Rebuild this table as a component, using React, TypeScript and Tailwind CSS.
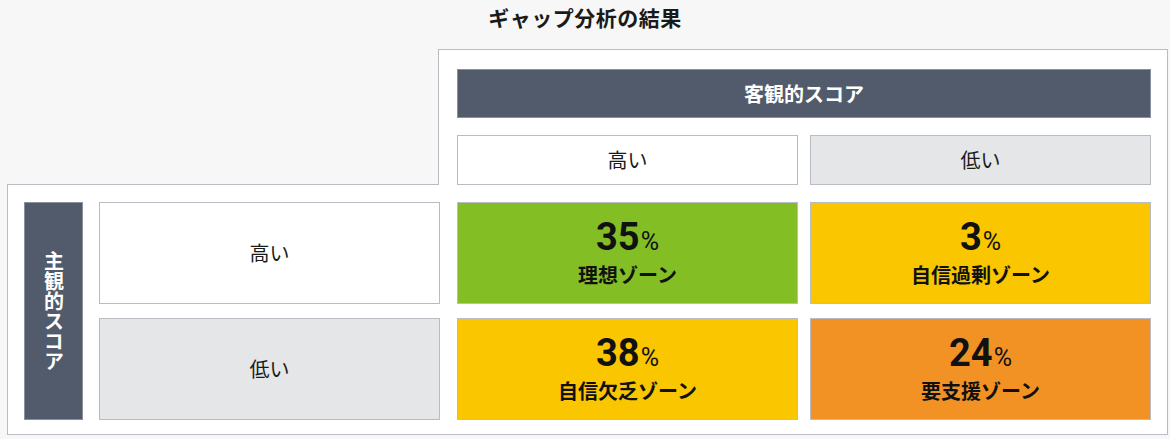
const jp = "font-['Noto_Sans_CJK_JP','Noto_Sans',sans-serif]";

const zones = [
  [
    { pct: "35", name: "理想ゾーン", bg: "bg-[#83be25]" },
    { pct: "3", name: "自信過剰ゾーン", bg: "bg-[#fac600]" },
  ],
  [
    { pct: "38", name: "自信欠乏ゾーン", bg: "bg-[#fac600]" },
    { pct: "24", name: "要支援ゾーン", bg: "bg-[#f39224]" },
  ],
];

function Zone({ pct, name, bg }: { pct: string; name: string; bg: string }) {
  return (
    <div
      className={`w-[341px] h-[102px] border border-[#b9bdc3] ${bg} flex flex-col items-center justify-center text-[#111]`}
    >
      <div className="flex items-baseline h-[30px] leading-[30px] font-['Roboto',sans-serif]">
        <span className="text-[38px] font-bold">{pct}</span>
        <span className="text-[25px] ml-[1px]">%</span>
      </div>
      <div className={`${jp} font-bold text-[20px] leading-none mt-[13px]`}>{name}</div>
    </div>
  );
}

export default function App() {
  return (
    <div className={`w-[1170px] h-[439px] bg-[#f7f7f7] ${jp} overflow-hidden`}>
      <h1 className="h-[49px] pt-[4px] text-center text-[21px] font-bold leading-[26px] tracking-[0.5px] text-[#1a1a1a]">
        ギャップ分析の結果
      </h1>

      <div className="pl-[7px] pr-[2px]">
        {/* top part: objective score header */}
        <div className="relative z-10 ml-[431px] -mb-px border border-b-0 border-[#b9bdc3] bg-white pt-[19px] pl-[18px] pr-[16px]">
          <div className="w-[694px] h-[49px] bg-[#525b6b] border border-[#8a919c] flex items-center justify-center text-white font-bold text-[20px]">
            客観的スコア
          </div>
          <div className="flex gap-[12px] mt-[17px]">
            <div className="w-[341px] h-[50px] border border-[#b9bdc3] bg-white flex items-center justify-center text-[20px] text-[#1a1a1a]">
              高い
            </div>
            <div className="w-[341px] h-[50px] border border-[#b9bdc3] bg-[#e5e6e8] flex items-center justify-center text-[20px] text-[#1a1a1a]">
              低い
            </div>
          </div>
        </div>

        {/* bottom part: subjective score rows */}
        <div className="border border-[#b9bdc3] bg-white pt-[17px] pl-[16px] pr-[16px] pb-[14px] flex">
          <div className="w-[59px] h-[218px] bg-[#525b6b] border border-[#8a919c] flex items-center justify-center">
            <span className="[writing-mode:vertical-rl] text-white font-bold text-[20px] leading-none">
              主観的スコア
            </span>
          </div>
          <div className="ml-[16px] flex flex-col gap-[14px]">
            {zones.map((row, i) => (
              <div key={i} className="flex">
                <div
                  className={`w-[341px] h-[102px] border border-[#b9bdc3] ${
                    i === 0 ? "bg-white" : "bg-[#e5e6e8]"
                  } flex items-center justify-center text-[20px] text-[#1a1a1a]`}
                >
                  {i === 0 ? "高い" : "低い"}
                </div>
                <div className="ml-[17px] flex gap-[12px]">
                  {row.map((z) => (
                    <Zone key={z.name} {...z} />
                  ))}
                </div>
              </div>
            ))}
          </div>
        </div>
      </div>
    </div>
  );
}
